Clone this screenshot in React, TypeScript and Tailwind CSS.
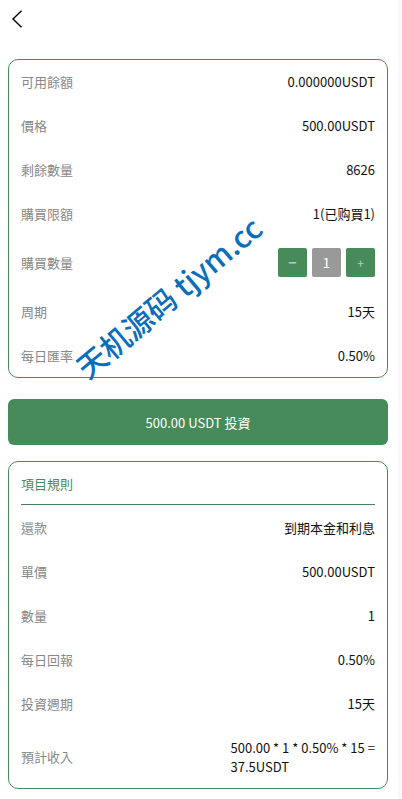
const font = { fontFamily: '"Noto Sans CJK TC", "Noto Sans", sans-serif' };

function Row({ label, value, first }: { label: string; value: string; first?: boolean }) {
  return (
    <div className={`flex items-center justify-between ${first ? "h-[43px]" : "h-11"}`}>
      <span className="text-[#888888]">{label}</span>
      <span className="text-[#111111]">{value}</span>
    </div>
  );
}

function StepButton({ children, className }: { children: string; className: string }) {
  return (
    <div className={`flex h-[29px] w-[29px] items-center justify-center rounded-[2px] ${className}`}>
      {children}
    </div>
  );
}

export default function App() {
  return (
    <div
      className="relative h-[799px] w-[402px] overflow-hidden bg-[#f8f8ff] text-[13px] leading-[19px]"
      style={font}
    >
      <div className="h-full w-[398px] bg-white px-2">
        <div className="flex h-[59px] items-start pt-[10px]">
          <svg width="12" height="18" viewBox="0 0 12 18" fill="none" className="ml-[3px]">
            <path d="M10.5 0.8 L2 9 L10.5 17.2" stroke="#000" strokeWidth="1.4" />
          </svg>
        </div>

        <div className="w-[380px] rounded-[10px] border border-[#488b5a] px-3">
          <Row first label="可用餘額" value="0.000000USDT" />
          <Row label="價格" value="500.00USDT" />
          <Row label="剩餘數量" value="8626" />
          <Row label="購買限額" value="1(已购買1)" />
          <div className="flex h-[54px] items-center justify-between">
            <span className="text-[#888888]">購買數量</span>
            <div className="flex gap-[5px]">
              <StepButton className="bg-[#488b5a] text-[14px] font-bold text-white/60">−</StepButton>
              <StepButton className="bg-[#999999] text-[14px] text-white">1</StepButton>
              <StepButton className="bg-[#488b5a] text-[12px] text-white/60">+</StepButton>
            </div>
          </div>
          <Row label="周期" value="15天" />
          <Row label="每日匯率" value="0.50%" />
        </div>

        <div className="mt-[21px] flex h-[46px] w-[380px] items-center justify-center rounded-md bg-[#488b5a] text-white">
          500.00 USDT 投資
        </div>

        <div className="mt-4 w-[380px] rounded-[10px] border border-[#488b5a] px-3">
          <div className="flex h-[43px] items-center border-b border-[#4a7f5a] text-[#488b5a]">項目規則</div>
          <Row label="還款" value="到期本金和利息" />
          <Row label="單價" value="500.00USDT" />
          <Row label="數量" value="1" />
          <Row label="每日回報" value="0.50%" />
          <Row label="投資週期" value="15天" />
          <div className="flex h-[63px] items-center justify-between">
            <span className="text-[#888888]">預計收入</span>
            <span className="w-[144.5px] text-[#111111]">500.00 * 1 * 0.50% * 15 = 37.5USDT</span>
          </div>
        </div>
      </div>

      <div className="absolute left-[55px] top-[285px] w-[210px] origin-center -rotate-[40deg] whitespace-nowrap text-[30px] leading-[36px] font-medium text-[#0a6ebd]">
        天机源码 tjym.cc
      </div>
    </div>
  );
}
